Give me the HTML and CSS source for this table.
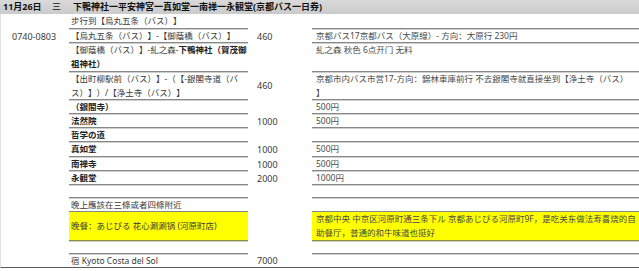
FILE: index.html
```html
<!DOCTYPE html>
<html lang="zh">
<head>
<meta charset="utf-8">
<title>11月26日</title>
<link rel="stylesheet" href="styles.css">
</head>
<body>
<div class="sheet">
  <div class="head">
    <span class="h-date">11月26日</span>
    <span class="h-day">三</span>
    <span class="h-title">下鴨神社一平安神宮一真如堂一南禅一永観堂(京都バス一日券)</span>
  </div>
  <div class="body">
    <div class="row r15">
      <div class="t"></div>
      <div class="m">步行到【烏丸五条（バス）】</div>
      <div class="p"></div>
      <div class="n"></div>
    </div>
    <div class="row">
      <div class="t">0740-0803</div>
      <div class="m">【烏丸五条（バス）】-【御蔭橋（バス）】</div>
      <div class="p">460</div>
      <div class="n">京都バス17京都バス（大原線）- 方向：大原行 230円</div>
    </div>
    <div class="row r2">
      <div class="t"></div>
      <div class="m">【御蔭橋（バス）】-糺之森-<b>下鴨神社（賀茂御<br>祖神社）</b></div>
      <div class="p"></div>
      <div class="n top">糺之森 秋色 6点开门 无料</div>
    </div>
    <div class="row r2b">
      <div class="t"></div>
      <div class="m">【出町柳駅前（バス）】-（【-銀閣寺道（バ<br>ス）】）/【浄土寺（バス）】</div>
      <div class="p">460</div>
      <div class="n">京都市内バス市営17-方向：錦林車庫前行 不去銀閣寺就直接坐到【浄土寺（バス）<br>】</div>
    </div>
    <div class="row">
      <div class="t"></div>
      <div class="m"><b>（銀閣寺）</b></div>
      <div class="p"></div>
      <div class="n">500円</div>
    </div>
    <div class="row">
      <div class="t"></div>
      <div class="m"><b>法然院</b></div>
      <div class="p">1000</div>
      <div class="n">500円</div>
    </div>
    <div class="row">
      <div class="t"></div>
      <div class="m"><b>哲学の道</b></div>
      <div class="p"></div>
      <div class="n"></div>
    </div>
    <div class="row r15">
      <div class="t"></div>
      <div class="m"><b>真如堂</b></div>
      <div class="p">1000</div>
      <div class="n">500円</div>
    </div>
    <div class="row">
      <div class="t"></div>
      <div class="m"><b>南禅寺</b></div>
      <div class="p">1000</div>
      <div class="n">500円</div>
    </div>
    <div class="row">
      <div class="t"></div>
      <div class="m"><b>永観堂</b></div>
      <div class="p">2000</div>
      <div class="n">1000円</div>
    </div>
    <div class="row">
      <div class="t"></div>
      <div class="m"></div>
      <div class="p"></div>
      <div class="n"></div>
    </div>
    <div class="row">
      <div class="t"></div>
      <div class="m">晚上應該在三條或者四條附近</div>
      <div class="p"></div>
      <div class="n"></div>
    </div>
    <div class="row r2 hl">
      <div class="t"></div>
      <div class="m">晚餐：あじびる 花心涮涮锅 (河原町店)</div>
      <div class="p"></div>
      <div class="n">京都中央 中京区河原町通三条下ル 京都あじびる河原町9F，是吃关东做法寿喜烧的自<br>助餐厅，普通的和牛味道也挺好</div>
    </div>
    <div class="row">
      <div class="t"></div>
      <div class="m"></div>
      <div class="p"></div>
      <div class="n"></div>
    </div>
    <div class="row last">
      <div class="t"></div>
      <div class="m">宿 Kyoto Costa del Sol</div>
      <div class="p">7000</div>
      <div class="n"></div>
    </div>
  </div>
</div>
</body>
</html>
```

FILE: styles.css
```css
html, body {
  margin: 0;
  padding: 0;
  background: #ffffff;
}

body {
  font-family: "Noto Sans", "Noto Sans CJK SC", "Noto Sans CJK JP", sans-serif;
  font-size: 8.5px;
  color: #3a3a3a;
  text-spacing-trim: space-all;
}

.sheet {
  width: 639px;
}

.head {
  display: flex;
  align-items: center;
  height: 14px;
  line-height: 14px;
  font-size: 9px;
  background: linear-gradient(#d9d9d9, #cbcbcb);
  color: #111;
}

.h-date {
  font-weight: bold;
  width: 49px;
  padding-left: 3px;
}

.h-day {
  width: 18px;
}

.h-title {
  font-weight: bold;
  padding-left: 3px;
}

.body {
  border-left: 1px solid #e2e2e2;
  border-bottom: 1px solid #5a5a5a;
}

.row {
  display: grid;
  grid-template-columns: 68px 179px 64px 327px;
  line-height: 13px;
  min-height: 13px;
}

.row.r15 {
  line-height: 14px;
  min-height: 14px;
}

.row.r2 {
  line-height: 14px;
}

.row.r2b {
  line-height: 13.5px;
}

.t {
  padding-left: 11px;
  font-size: 9px;
  display: flex;
  align-items: center;
}

.m {
  padding-left: 2px;
  border-bottom: 1px solid #888888;
  box-shadow: 0 1px 0 #cfcfcf;
  white-space: nowrap;
}

.p {
  padding-left: 9px;
  font-size: 9px;
  display: flex;
  align-items: center;
}

.n {
  padding-left: 4px;
  border-bottom: 1px solid #888888;
  box-shadow: 0 1px 0 #cfcfcf;
  white-space: nowrap;
  color: #4a4a4a;
}

.n.top {
  line-height: 14px;
}

b {
  color: #222;
}

.hl .m,
.hl .n {
  background: #ffff00;
  border-bottom-color: #8f8f3a;
}

.hl .m {
  display: flex;
  align-items: center;
}

.last .m,
.last .n {
  border-bottom: 0;
  box-shadow: none;
}
```
